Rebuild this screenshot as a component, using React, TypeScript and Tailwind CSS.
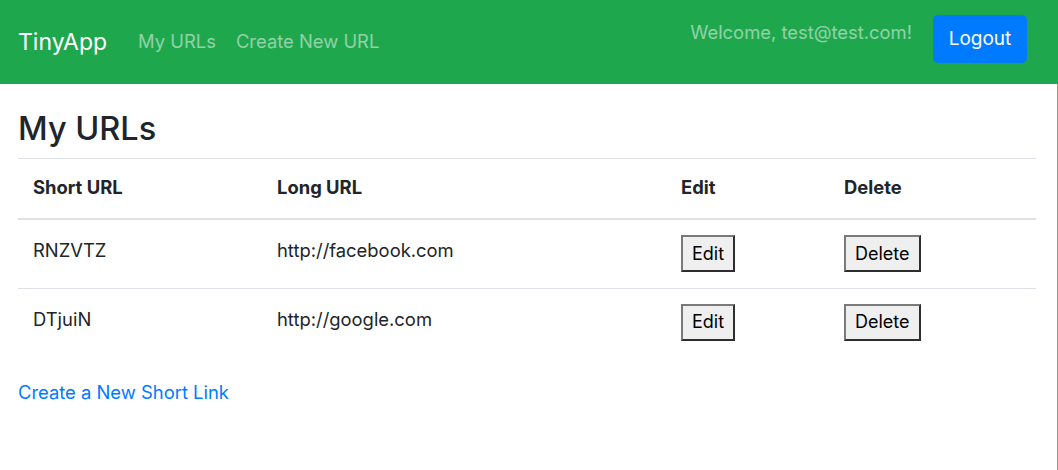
import React from "react";

const urls = [
  { short: "RNZVTZ", long: "http://facebook.com" },
  { short: "DTjuiN", long: "http://google.com" },
];

const btn =
  "bg-[#efefef] text-black text-[18px] leading-none px-[9px] h-[37px] border-2 border-t-[#7a7a7a] border-l-[#7a7a7a] border-r-[#2e2e2e] border-b-[#2e2e2e]";

export default function App() {
  return (
    <div className="min-h-[470px] bg-white text-[#212529] font-['Inter','Helvetica_Neue',sans-serif] text-[18.4px]">
      {/* Navbar */}
      <nav className="h-[84px] bg-[#1fa74e] flex items-center px-[18px]">
        <a className="text-white text-[23px] mr-[31px]">TinyApp</a>
        <a className="text-white/50 mr-[20px]">My URLs</a>
        <a className="text-white/50">Create New URL</a>
        <div className="ml-auto flex items-center mb-[6px]">
          <span className="text-white/50 mr-[21px] -mt-[12px]">Welcome, test@test.com!</span>
          <button className="bg-[#007bff] text-white text-[19px] rounded-[5px] w-[94px] h-[48px] mr-[13px]">
            Logout
          </button>
        </div>
      </nav>

      {/* Content */}
      <main className="px-[18px] pt-[29px] pr-[21px] border-r border-[#a39c6c] min-h-[386px]">
        <h2 className="text-[32.5px] font-medium leading-none mb-[12px]">My URLs</h2>
        <table className="w-full border-collapse text-left">
          <thead>
            <tr className="border-t border-[#dee2e6] border-b-2 border-b-[#dee2e6]">
              <th className="w-[244px] h-[61px] px-[15px] font-bold">Short URL</th>
              <th className="w-[404px] px-[15px] font-bold">Long URL</th>
              <th className="w-[163px] px-[15px] font-bold">Edit</th>
              <th className="px-[15px] font-bold">Delete</th>
            </tr>
          </thead>
          <tbody>
            {urls.map((u, i) => (
              <tr key={u.short} className={i === 0 ? "border-b border-[#dee2e6]" : ""}>
                <td className="h-[69px] px-[15px] align-top pt-[17px]">{u.short}</td>
                <td className="px-[15px] align-top pt-[17px]">{u.long}</td>
                <td className="px-[15px] align-top pt-[15px]">
                  <button className={btn}>Edit</button>
                </td>
                <td className="px-[15px] align-top pt-[15px]">
                  <button className={btn}>Delete</button>
                </td>
              </tr>
            ))}
          </tbody>
        </table>
        <a className="block mt-[22px] text-[#007bff]">Create a New Short Link</a>
      </main>
    </div>
  );
}
